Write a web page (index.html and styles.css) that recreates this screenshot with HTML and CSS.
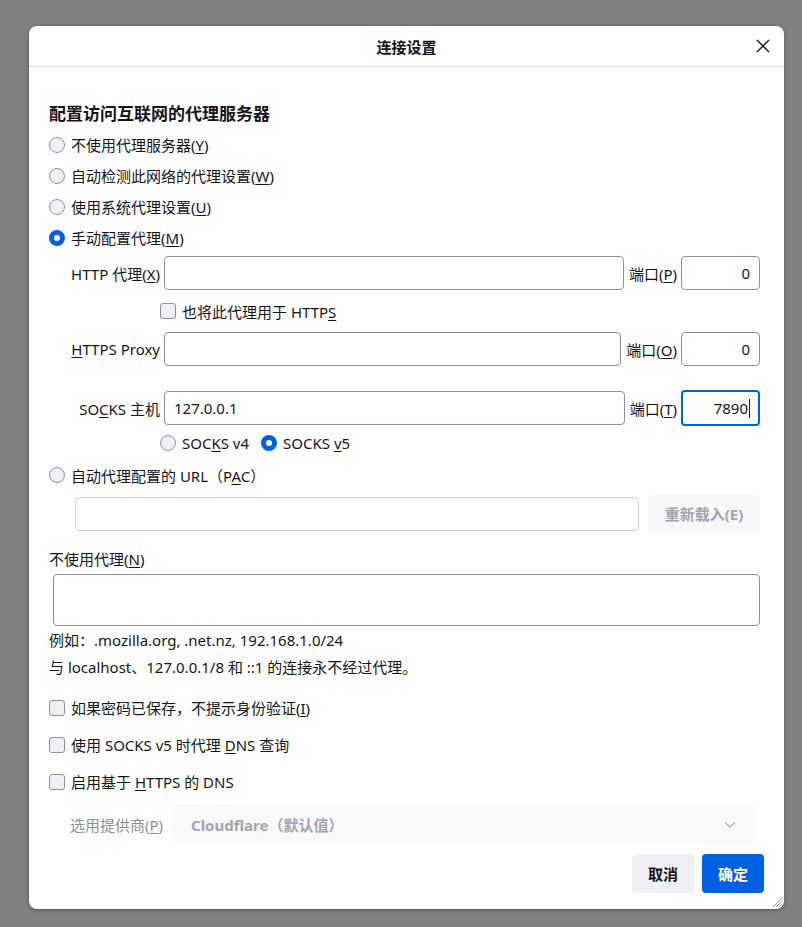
FILE: index.html
```html
<!DOCTYPE html>
<html lang="zh-CN">
<head>
<meta charset="utf-8">
<title>连接设置</title>
<link rel="stylesheet" href="styles.css">
</head>
<body>
<div class="dialog">
  <header class="titlebar">
    <span></span>
    <div class="title">连接设置</div>
    <button class="close" aria-label="关闭">
      <svg width="14" height="14" viewBox="0 0 14 14"><path d="M1 1 L13 13 M13 1 L1 13" stroke="#15141a" stroke-width="1.4" fill="none"/></svg>
    </button>
  </header>
  <main class="content">
    <h2 class="heading">配置访问互联网的代理服务器</h2>
    <div class="opt"><span class="radio"></span><span>不使用代理服务器(<u>Y</u>)</span></div>
    <div class="opt"><span class="radio"></span><span>自动检测此网络的代理设置(<u>W</u>)</span></div>
    <div class="opt"><span class="radio"></span><span>使用系统代理设置(<u>U</u>)</span></div>
    <div class="opt"><span class="radio on"></span><span>手动配置代理(<u>M</u>)</span></div>

    <div class="prow first">
      <span class="plabel">HTTP 代理(<u>X</u>)</span>
      <div class="field grow"></div>
      <span class="portlabel">端口(<u>P</u>)</span>
      <div class="field port">0</div>
    </div>
    <div class="share"><span class="check"></span><span>也将此代理用于 HTTP<u>S</u></span></div>
    <div class="prow">
      <span class="plabel"><u>H</u>TTPS Proxy</span>
      <div class="field grow"></div>
      <span class="portlabel">端口(<u>O</u>)</span>
      <div class="field port">0</div>
    </div>
    <div class="prow socks">
      <span class="plabel">SO<u>C</u>KS 主机</span>
      <div class="field grow">127.0.0.1</div>
      <span class="portlabel">端口(<u>T</u>)</span>
      <div class="field port focus"><span>7890</span><span class="caret"></span></div>
    </div>
    <div class="ver">
      <span class="radio"></span><span class="vtext">SOC<u>K</u>S v4</span>
      <span class="radio on"></span><span>SOCKS <u>v</u>5</span>
    </div>
    <div class="opt pac"><span class="radio"></span><span>自动代理配置的 URL（P<u>A</u>C）</span></div>
    <div class="pacrow">
      <div class="field grow dis"></div>
      <button class="reload">重新载入(E)</button>
    </div>

    <div class="noproxy">不使用代理(<u>N</u>)</div>
    <div class="textarea"></div>
    <div class="hint first">例如：.mozilla.org, .net.nz, 192.168.1.0/24</div>
    <div class="hint">与 localhost、127.0.0.1/8 和 ::1 的连接永不经过代理。</div>

    <div class="crow first"><span class="check"></span><span>如果密码已保存，不提示身份验证(<u>I</u>)</span></div>
    <div class="crow"><span class="check"></span><span>使用 SOCKS v5 时代理 <u>D</u>NS 查询</span></div>
    <div class="crow"><span class="check"></span><span>启用基于 <u>H</u>TTPS 的 DNS</span></div>

    <div class="provider">
      <span class="provlabel">选用提供商(<u>P</u>)</span>
      <div class="select">
        <span>Cloudflare（默认值）</span>
        <svg class="chev" width="12" height="8" viewBox="0 0 12 8"><path d="M1 1.5 L6 6 L11 1.5" stroke="#a8a8ae" stroke-width="1.2" fill="none"/></svg>
      </div>
    </div>

    <div class="buttons">
      <button class="btn">取消</button>
      <button class="btn primary">确定</button>
    </div>
  </main>
  <svg class="grip" width="12" height="12" viewBox="0 0 12 12"><path d="M11 2 L2 11 M11 5 L5 11 M11 8 L8 11" stroke="#9a9a9a" stroke-width="1" fill="none"/></svg>
</div>
</body>
</html>
```
FILE: styles.css
```css
html, body {
  margin: 0;
  padding: 0;
}
body {
  background: #808080;
  font-family: "Noto Sans", "Noto Sans CJK SC", sans-serif;
  font-size: 15px;
  color: #15141a;
  height: 927px;
  overflow: hidden;
}
u {
  text-decoration: underline;
  text-underline-offset: 2px;
  text-decoration-thickness: 1px;
}
.dialog {
  margin: 26px 0 0 29px;
  width: 755px;
  height: 883px;
  background: #fff;
  border-radius: 8px;
  box-shadow: 0 1px 4px rgba(0, 0, 0, 0.35);
  display: flex;
  flex-direction: column;
  position: relative;
}
.titlebar {
  height: 40px;
  border-bottom: 1px solid #dedee3;
  display: grid;
  grid-template-columns: 1fr auto 1fr;
  align-items: center;
}
.title {
  font-weight: 700;
  font-size: 15px;
}
.close {
  justify-self: end;
  margin-right: 14px;
  border: 0;
  background: transparent;
  padding: 0;
  width: 14px;
  height: 14px;
  display: flex;
}
.content {
  flex: 1;
  padding: 0 24px 0 20px;
  display: flex;
  flex-direction: column;
}
.heading {
  margin: 31px 0 0;
  height: 31px;
  line-height: 31px;
  font-size: 17px;
  font-weight: 700;
}
.opt {
  height: 31px;
  display: flex;
  align-items: center;
  gap: 6px;
}
.radio {
  width: 16px;
  height: 16px;
  box-sizing: border-box;
  border-radius: 50%;
  border: 1px solid #8f8f9d;
  background: #f0f0f4;
  flex-shrink: 0;
}
.radio.on {
  border: 5px solid #0061e0;
  background: #fff;
}
.check {
  width: 16px;
  height: 16px;
  box-sizing: border-box;
  border-radius: 3px;
  border: 1px solid #8f8f9d;
  background: #f0f0f4;
  flex-shrink: 0;
}
.prow {
  display: flex;
  align-items: center;
  height: 34px;
  margin-top: 4px;
}
.prow.first {
  margin-top: 3px;
}
.prow.socks {
  margin-top: 25px;
}
.plabel {
  width: 111px;
  text-align: right;
  margin-right: 4px;
  flex-shrink: 0;
  white-space: nowrap;
}
.field {
  height: 34px;
  box-sizing: border-box;
  border: 1px solid #8f8f9d;
  border-radius: 4px;
  padding: 0 9px;
  display: flex;
  align-items: center;
}
.grow {
  flex: 1;
}
.portlabel {
  margin: 0 4px 0 5px;
  white-space: nowrap;
}
.port {
  width: 79px;
  flex-shrink: 0;
  justify-content: flex-end;
}
.port.focus {
  border: 2px solid #0061e0;
  height: 36px;
  padding: 0 8px;
}
.caret {
  width: 1px;
  height: 19px;
  background: #15141a;
  margin-left: 1px;
}
.share {
  height: 34px;
  margin-top: 4px;
  padding-left: 111px;
  display: flex;
  align-items: center;
  gap: 6px;
}
.ver {
  height: 36px;
  padding-left: 111px;
  display: flex;
  align-items: center;
  gap: 6px;
}
.vtext {
  margin-right: 6px;
}
.opt.pac {
  height: 28px;
}
.pacrow {
  margin-top: 5px;
  height: 39px;
  padding-left: 26px;
  display: flex;
  align-items: center;
}
.field.dis {
  border-color: #cfcfd8;
}
.reload {
  width: 112px;
  height: 39px;
  margin-left: 9px;
  border: 0;
  border-radius: 4px;
  background: #f7f7f9;
  color: #a4a4aa;
  font: 700 15px "Noto Sans", "Noto Sans CJK SC", sans-serif;
}
.noproxy {
  margin-top: 12px;
  height: 28px;
  line-height: 28px;
}
.textarea {
  margin: 1px 0 0 4px;
  height: 52px;
  box-sizing: border-box;
  border: 1px solid #8f8f9d;
  border-radius: 4px;
}
.hint {
  height: 27px;
  line-height: 27px;
}
.hint.first {
  margin-top: 1px;
}
.crow {
  height: 37px;
  display: flex;
  align-items: center;
  gap: 6px;
}
.crow.first {
  margin-top: 8px;
}
.provider {
  margin-top: 4px;
  height: 41px;
  padding-left: 21px;
  display: flex;
  align-items: center;
}
.provlabel {
  color: #8f8f95;
  width: 94px;
  white-space: nowrap;
}
.select {
  flex: 1;
  margin: 0 4px 0 8px;
  height: 41px;
  border-radius: 4px;
  background: #f9f9fb;
  color: #a4a4aa;
  font-weight: 700;
  display: flex;
  align-items: center;
  justify-content: space-between;
  padding: 0 20px 0 19px;
}
.buttons {
  margin: 9px -4px 0 0;
  display: flex;
  justify-content: flex-end;
  gap: 8px;
}
.btn {
  width: 62px;
  height: 39px;
  border: 0;
  border-radius: 4px;
  background: #f0f0f4;
  color: #15141a;
  font: 700 15px "Noto Sans", "Noto Sans CJK SC", sans-serif;
}
.btn.primary {
  background: #0061e0;
  color: #fff;
}
.grip {
  position: absolute;
  right: 1px;
  bottom: 1px;
}
```
